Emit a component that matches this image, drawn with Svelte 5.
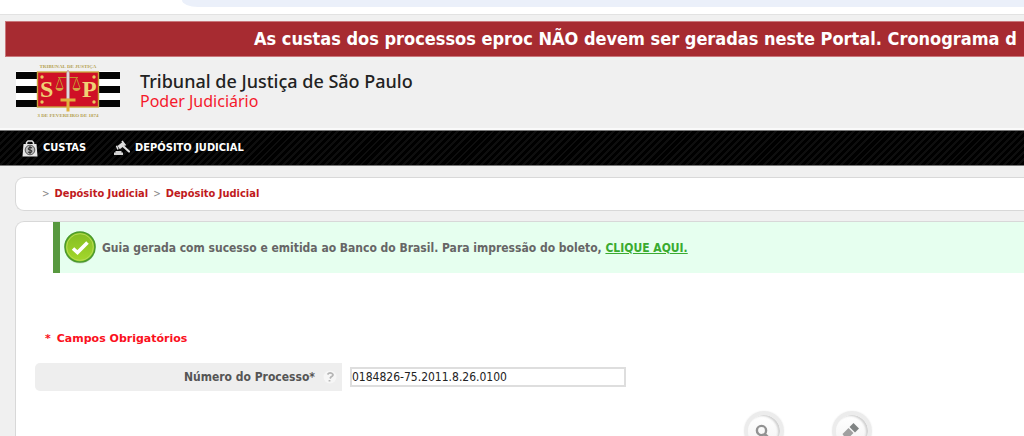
<script>
  let processo = $state('0184826-75.2011.8.26.0100');
  const trilha = ['Depósito Judicial', 'Depósito Judicial'];
</script>

<div class="page">
  <div class="browser"><div class="address"></div></div>

  <div class="notice">
    As custas dos processos eproc NÃO devem ser geradas neste Portal. Cronograma d
  </div>

  <header class="brand">
    <svg class="crest" viewBox="0 0 104 56" width="104" height="56" role="img" aria-label="Tribunal de Justiça">
      <rect y="8" width="104" height="36" fill="#fff" />
      <g fill="#050505">
        <rect y="9" width="104" height="7" />
        <rect y="23" width="104" height="7" />
        <rect y="37" width="104" height="7" />
      </g>
      <rect x="21.500" y="9" width="61" height="35" fill="#cf1026" stroke="#c9a33c" stroke-width="1.400" />
      <g fill="#e8c860">
        <circle cx="26" cy="14" r="1.700" /><circle cx="78" cy="14" r="1.700" />
        <circle cx="26" cy="39" r="1.700" /><circle cx="78" cy="39" r="1.700" />
      </g>
      <g fill="#f0d175" font-family="Liberation Serif, serif" font-weight="bold" font-size="24">
        <text x="24" y="34">S</text>
        <text x="66" y="34">P</text>
      </g>
      <g fill="none" stroke="#c4902f" stroke-width="1">
        <path d="M42 14.500H62M43.500 15L40 25M43.500 15L47 25M60.500 15L57 25M60.500 15L64 25" />
      </g>
      <path d="M39.500 25h8q-1 3-4 3t-4-3zM56.500 25h8q-1 3-4 3t-4-3z" fill="#d6a445" />
      <path d="M52 7L53.500 10V36H50.500V10z" fill="#dfd9df" stroke="#a87a88" stroke-width=".5" />
      <path d="M44.500 35.500h15v3h-6v10h-3v-10h-6z" fill="#e0b13e" />
      <g fill="#b5a250" font-family="Liberation Serif, serif" font-weight="bold" font-size="5" text-anchor="middle">
        <text x="52" y="5">TRIBUNAL DE JUSTIÇA</text>
        <text x="52" y="54">3 DE FEVEREIRO DE 1874</text>
      </g>
    </svg>
    <div class="names">
      <div class="court">Tribunal de Justiça de São Paulo</div>
      <div class="power">Poder Judiciário</div>
    </div>
  </header>

  <nav class="menu">
    <a href="#custas">
      <svg viewBox="0 0 16 17" width="16" height="17" aria-hidden="true">
        <path d="M4.500 4.500V2.500L6 1h4l1.500 1.500v2" fill="none" stroke="#e2e2e2" stroke-width="1.500" />
        <path d="M1.500 4h13l1 12.500H.5z" fill="#e6e6e6" />
        <circle cx="8" cy="10" r="4.800" fill="#bbb" stroke="#555" />
        <path d="M10 8Q8 6.600 6.700 8T8 10t1.500 2-3.500 0M8 6v8" fill="none" stroke="#333" stroke-width="1.100" />
      </svg>
      CUSTAS
    </a>
    <a href="#deposito">
      <svg viewBox="0 0 16 16" width="16" height="16" aria-hidden="true">
        <path d="M9 6L15 11.500" stroke="#dedede" stroke-width="2.200" stroke-linecap="round" />
        <path d="M3.500 6L8.500 2l2.300 3.200-5 4z" fill="#dedede" />
        <path d="M2.500 5.800L4 9.500M8 1l3.500 4.500" stroke="#dedede" stroke-width="1.600" />
        <path d="M0 15v-2.500h1.500v-1.500h6v1.500H9V15z" fill="#d3d3d3" />
      </svg>
      DEPÓSITO JUDICIAL
    </a>
  </nav>

  <main>
    <nav class="crumbs" aria-label="Trilha">
      {#each trilha as item}
        <span>&gt;</span><a href="#deposito">{item}</a>
      {/each}
    </nav>

    <section class="panel">
      <div class="alert" role="status">
        <svg viewBox="0 0 34 34" width="34" height="34" aria-hidden="true">
          <defs>
            <linearGradient id="verde" x2="0" y2="1">
              <stop stop-color="#83bd22" /><stop offset="1" stop-color="#a5d82c" />
            </linearGradient>
          </defs>
          <circle cx="17" cy="17" r="15.500" fill="#a9b9a5" opacity=".5" />
          <circle cx="17" cy="16" r="15" fill="url(#verde)" stroke="#4b9a2b" stroke-width="1.600" />
          <circle cx="17" cy="16" r="13.300" fill="none" stroke="#b5da55" stroke-width="1" />
          <path d="M10 17.500l4.500 4L24.500 11.500" fill="none" stroke="#fff" stroke-width="3.600" />
        </svg>
        <p>
          Guia gerada com sucesso e emitida ao Banco do Brasil. Para impressão do boleto,
          <a href="#boleto">CLIQUE AQUI.</a>
        </p>
      </div>

      <form onsubmit={(e) => e.preventDefault()}>
        <p class="required"><span>*</span><span>Campos Obrigatórios</span></p>
        <div class="row">
          <div class="label">
            <label for="processo">Número do Processo*</label>
            <svg viewBox="0 0 14 14" width="14" height="14" aria-hidden="true">
              <circle cx="7" cy="7" r="6.500" fill="#f6f6f6" />
              <path d="M4.500 4.500Q6.500 2 9 3.500T8 7L7 8.500M6.500 10v1.500" fill="none" stroke="#b5b5b5" stroke-width="1.800" />
            </svg>
          </div>
          <input id="processo" type="text" bind:value={processo} />
        </div>
        <div class="actions">
          <button type="submit" aria-label="Consultar">
            <svg viewBox="0 0 24 24" width="24" height="24" aria-hidden="true">
              <circle cx="9.500" cy="11.500" r="4.600" fill="none" stroke="#929292" stroke-width="2.400" />
              <path d="M12.500 15l5 5" stroke="#929292" stroke-width="3" />
            </svg>
          </button>
          <button type="reset" aria-label="Limpar">
            <svg viewBox="0 0 24 24" width="24" height="24" aria-hidden="true">
              <path d="M13.500 4l5.500 5.500L15 13.500 9.500 8z" fill="#808484" />
              <path d="M8.500 9l5 5L9.500 18h-5L2.500 15z" fill="#a0a0a0" />
            </svg>
          </button>
        </div>
      </form>
    </section>
  </main>
</div>

<style>
  :global(body) {
    background: #f0f0f0;
  }
  .page {
    height: 100vh;
    overflow: hidden;
    font: bold 12px/16px 'DejaVu Sans Condensed', Tahoma, sans-serif;
    color: #666;
  }
  a {
    color: inherit;
    text-decoration: none;
  }
  p {
    margin: 0;
  }
  svg {
    flex: none;
  }
  .browser {
    height: 14px;
    background: #fff;
    border-bottom: 1px solid #e2e2e2;
    margin-bottom: 6px;
    padding-left: 182px;
  }
  .address {
    height: 7px;
    background: #ebf0fa;
    border-bottom-left-radius: 16px 7px;
  }
  .notice {
    margin-left: 5px;
    padding: 5px 0 5px 248px;
    background: #a72b31;
    border: 1px solid #c9777b;
    border-right: 0;
    color: #fff;
    font-size: 18px;
    line-height: 24px;
    white-space: nowrap;
    overflow: hidden;
  }
  .brand {
    display: flex;
    gap: 20px;
    height: 65px;
    padding: 6px 0 0 16px;
    border-bottom: 2px solid #fafafa;
  }
  .names {
    padding-top: 8px;
    font: 500 18px/20px 'Noto Sans', sans-serif;
    color: #222;
  }
  .power {
    color: #f5192b;
    font-weight: 400;
    font-size: 16px;
  }
  .menu {
    display: flex;
    align-items: center;
    gap: 28px;
    height: 34px;
    padding-left: 22px;
    border-top: 1px solid #777;
    border-bottom: 1px solid #777;
    background: repeating-linear-gradient(135deg, #000 0 3px, #0e0e0e 3px 5px);
    color: #fff;
    font-size: 11px;
  }
  .menu a {
    display: flex;
    align-items: center;
    gap: 5px;
  }
  main {
    display: grid;
    gap: 10px;
    padding: 11px 0 0 15px;
  }
  .crumbs,
  .panel {
    background: #fff;
    border: 1px solid #d8d8d8;
    border-right: 0;
    border-radius: 9px 0 0 9px;
  }
  .crumbs {
    display: flex;
    gap: 5px;
    padding: 8px 0 8px 26px;
    color: #c01a20;
    font-size: 11px;
  }
  .crumbs span {
    color: #888;
    font-weight: 400;
    font-size: 10px;
  }
  .panel {
    min-height: 300px;
    overflow: hidden;
  }
  .alert {
    display: flex;
    align-items: center;
    gap: 5px;
    margin-left: 37px;
    height: 51px;
    padding-left: 3px;
    border-left: 7px solid #58993f;
    background: #e6ffef;
    white-space: nowrap;
  }
  .alert a {
    color: #3aab30;
    text-decoration: underline;
  }
  form {
    padding: 58px 0 0 19px;
  }
  .required {
    display: flex;
    gap: 6px;
    padding-left: 10px;
    color: #fb1020;
    font: bold 11px/16px 'DejaVu Sans', Verdana, sans-serif;
  }
  .row {
    display: flex;
    align-items: center;
    gap: 8px;
    margin-top: 16px;
  }
  .label {
    display: flex;
    align-items: center;
    justify-content: flex-end;
    gap: 8px;
    box-sizing: border-box;
    width: 307px;
    height: 28px;
    padding-right: 5px;
    border-radius: 5px 0 0 5px;
    background: #eee;
    color: #555;
  }
  input {
    box-sizing: border-box;
    width: 276px;
    height: 20px;
    padding: 0;
    border: 2px solid #dedede;
    background: #fff;
    color: #222;
    font: 12px/16px 'DejaVu Sans Condensed', Tahoma, sans-serif;
  }
  .actions {
    display: flex;
    justify-content: center;
    gap: 48px;
    margin: 20px 0 0 562px;
    width: 422px;
  }
  button {
    display: grid;
    place-items: center;
    width: 40px;
    height: 40px;
    padding: 0;
    border: 4px solid #ececec;
    border-radius: 50%;
    background: linear-gradient(#fff, #f3f3f3);
    background-clip: padding-box;
    box-shadow: inset -2px 1px 2px #d0d0d0, 0 0 2px #eee;
  }
</style>
